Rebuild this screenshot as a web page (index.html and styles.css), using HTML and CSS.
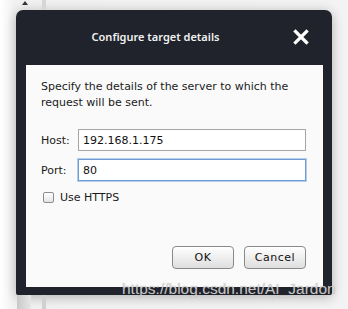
FILE: index.html
```html
<!DOCTYPE html>
<html lang="en">
  <head>
    <meta charset="UTF-8">
    <meta name="viewport" content="width=device-width, initial-scale=1.0">
    <title>Configure target details</title>
    <link rel="stylesheet" href="styles.css">
  </head>
  <body>

    <div class="topStrip">
      <span class="scrollArrow"></span>
      <span class="scrollLine"></span>
    </div>

    <section class="dialog">
      <div class="dialogHeader">
        <h1 class="dialogTitle">Configure target details</h1>
        <svg class="closeIcon" width="16" height="16" viewBox="0 0 16 16">
          <path d="M2.5 2.5 L13.5 13.5 M13.5 2.5 L2.5 13.5" stroke="white" stroke-width="3.2" stroke-linecap="square"/>
        </svg>
      </div>

      <div class="dialogBody">
        <p class="intro">Specify the details of the server to which the request will be sent.</p>

        <div class="fieldRow">
          <label class="fieldLabel">Host:</label>
          <input class="fieldInput" type="text" value="192.168.1.175">
        </div>

        <div class="fieldRow">
          <label class="fieldLabel">Port:</label>
          <input class="fieldInput focused" type="text" value="80">
        </div>

        <label class="checkRow">
          <span class="checkBox"></span>
          Use HTTPS
        </label>

        <div class="buttonsContainer">
          <button class="dialogButton">OK</button>
          <button class="dialogButton">Cancel</button>
        </div>
      </div>
    </section>

    <div class="bottomStrip">
      <span class="scrollBlock"></span>
      <span class="scrollLine"></span>
    </div>

    <p class="watermark">https://blog.csdn.net/AI_Jardon</p>

  </body>
</html>
```

FILE: styles.css
```css
body {
  margin: 0px;
  width: 348px;
  height: 309px;
  overflow: hidden;
  position: relative;
  font-family: "DejaVu Sans", Arial, sans-serif;
  background: linear-gradient(to right, #ffffff 0px, #f1f1f1 14px, #f3f3f3 100%);
}

.topStrip {
  height: 10px;
  display: flex;
  align-items: flex-start;
}

.scrollArrow {
  width: 0px;
  height: 0px;
  margin-left: 22px;
  margin-top: 1px;
  border-left: 3px solid transparent;
  border-right: 3px solid transparent;
  border-bottom: 4px solid #333333;
}

.scrollLine {
  width: 4px;
  height: 100%;
  margin-left: 14px;
  background-color: #d6d6d6;
}

.dialog {
  width: 316px;
  height: 285px;
  margin-left: 16px;
  box-sizing: border-box;
  padding: 0px 9px 8px 10px;
  background-color: #20232b;
  border-radius: 7px 7px 2px 2px;
  box-shadow: 0px 2px 12px rgba(0, 0, 0, 0.28);
  display: flex;
  flex-direction: column;
}

.dialogHeader {
  height: 55px;
  display: flex;
  align-items: center;
  justify-content: center;
  padding-right: 38px;
  position: relative;
}

.dialogTitle {
  font-family: "Noto Sans", sans-serif;
  font-size: 11px;
  font-weight: 600;
  color: #f2f2f2;
  margin: 0px;
  margin-top: -3px;
}

.closeIcon {
  position: absolute;
  right: 14px;
  top: 19px;
}

.dialogBody {
  flex: 1;
  background-color: #fafafa;
  padding: 14px 17px 0px 15px;
  display: flex;
  flex-direction: column;
  font-size: 11px;
  color: #1a1a1a;
}

.intro {
  margin: 0px;
  line-height: 16px;
  width: 260px;
}

.fieldRow {
  display: flex;
  align-items: center;
  margin-top: 8px;
}

.fieldRow:first-of-type {
  margin-top: 18px;
}

.fieldLabel {
  width: 37px;
}

.fieldInput {
  flex: 1;
  height: 22px;
  box-sizing: border-box;
  border: 1px solid #a5a5a5;
  background-color: #ffffff;
  padding: 0px 4px;
  font-family: "DejaVu Sans", Arial, sans-serif;
  font-size: 11px;
  color: #111111;
  outline: none;
}

.focused {
  border-color: #6d9dd3;
  box-shadow: 0px 0px 0px 1px #b4cde9;
}

.checkRow {
  display: flex;
  align-items: center;
  margin-top: 10px;
  margin-left: 2px;
}

.checkBox {
  width: 11px;
  height: 11px;
  box-sizing: border-box;
  border: 1px solid #8c8c8c;
  border-radius: 2px;
  background: linear-gradient(#ffffff, #e4e4e4);
  margin-right: 6px;
}

.buttonsContainer {
  margin-top: auto;
  margin-bottom: 18px;
  display: flex;
  justify-content: flex-end;
  gap: 10px;
}

.dialogButton {
  width: 62px;
  height: 23px;
  border: 1px solid #8a8a8a;
  border-radius: 4px;
  background: linear-gradient(#ffffff, #dedede);
  font-family: "DejaVu Sans", Arial, sans-serif;
  font-size: 11px;
  color: #111111;
  letter-spacing: 0.5px;
  padding: 0px;
}

.bottomStrip {
  height: 14px;
  display: flex;
}

.scrollBlock {
  width: 14px;
  margin-left: 17px;
  background: linear-gradient(to right, #c8c8c8, #e6e6e6);
}

.bottomStrip .scrollLine {
  margin-left: 11px;
  background-color: #d0d0d0;
}

.watermark {
  position: absolute;
  left: 122px;
  top: 280px;
  margin: 0px;
  font-family: "Liberation Sans", Arial, sans-serif;
  font-size: 15.5px;
  color: rgba(222, 222, 222, 0.85);
  text-shadow: 0px 0px 1px rgba(110, 110, 110, 0.5);
}
```
